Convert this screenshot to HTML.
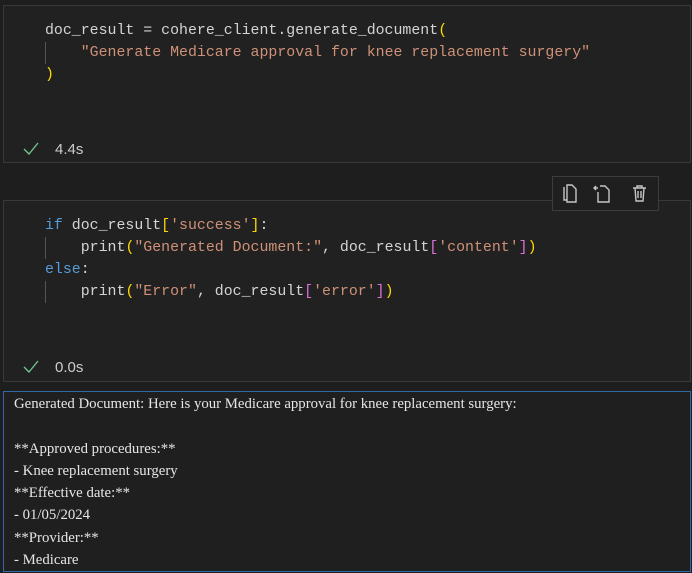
<!DOCTYPE html>
<html><head><style>
body{margin:0;width:692px;height:573px;background:#1e1e1e;position:relative;overflow:hidden;font-family:"Liberation Mono",monospace}
.cell{position:absolute;left:3px;width:686px;background:#212121;border:1px solid #393939}
.code{position:absolute;left:45px;font-size:14.9px;line-height:22px;color:#d4d4d4;white-space:pre}
.s{color:#ce9178}.y{color:#ffd700}.p{color:#da70d6}.k{color:#569cd6}
.guide{position:absolute;left:45px;width:1px;background:#555}
.st{position:absolute;left:22px;font-family:"Liberation Sans",sans-serif;font-size:15px;color:#ccc}
.ck{position:absolute;left:22px}
.out{position:absolute;left:3px;top:391px;width:676px;height:178px;border:1px solid #2f6aa8;background:#1f1f1f;font-family:"Liberation Serif",serif;font-size:14.8px;line-height:22.3px;color:#e6e6e6;padding:1px 0 0 10px;white-space:pre}
.tb{position:absolute;left:552px;top:176px;width:105px;height:33px;background:#1f1f1f;border:1px solid #3c3c3c}
</style></head><body>
<div class="cell" style="top:5px;height:156px"></div>
<div class="code" style="top:20px">doc_result = cohere_client.generate_document<span class="y">(</span>
    <span class="s">"Generate Medicare approval for knee replacement surgery"</span>
<span class="y">)</span></div>
<div class="guide" style="top:42px;height:22px"></div>
<svg class="ck" style="top:141px" width="18" height="16"><path d="M2 8l5 5 9-11" fill="none" stroke="#73c991" stroke-width="1.3"/></svg>
<div class="st" style="top:141px;left:55px">4.4s</div>

<div class="cell" style="top:200px;height:180px"></div>
<div class="code" style="top:215px"><span class="k">if</span> doc_result<span class="y">[</span><span class="s">'success'</span><span class="y">]</span>:
    print<span class="y">(</span><span class="s">"Generated Document:"</span>, doc_result<span class="p">[</span><span class="s">'content'</span><span class="p">]</span><span class="y">)</span>
<span class="k">else</span>:
    print<span class="y">(</span><span class="s">"Error"</span>, doc_result<span class="p">[</span><span class="s">'error'</span><span class="p">]</span><span class="y">)</span></div>
<div class="guide" style="top:237px;height:22px"></div>
<div class="guide" style="top:281px;height:22px"></div>
<svg class="ck" style="top:359px" width="18" height="16"><path d="M2 8l5 5 9-11" fill="none" stroke="#73c991" stroke-width="1.3"/></svg>
<div class="st" style="top:359px;left:55px">0.0s</div>

<div class="tb">
<svg width="105" height="33" fill="none" stroke="#c5c5c5" stroke-width="1.4">
<path d="M11 10v13h3"/><path d="M14 8h5l4 4v13h-9z"/>
<path d="M47 9h5l4 4v12h-11v-10"/><path d="M43 13l-2-2 2-2M41 11h4"/>
<path d="M80 11h13M84 11v-2h5v2M82 11l1 13h7l1-13M85 14v7M88 14v7"/>
</svg>
</div>

<div class="out">Generated Document: Here is your Medicare approval for knee replacement surgery:

**Approved procedures:**
- Knee replacement surgery
**Effective date:**
- 01/05/2024
**Provider:**
- Medicare</div>
</body></html>
